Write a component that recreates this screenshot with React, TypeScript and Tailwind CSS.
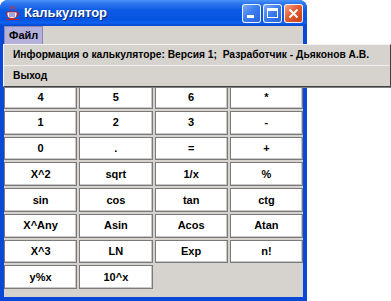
import React from "react";

const rows = [
  ["4", "5", "6", "*"],
  ["1", "2", "3", "-"],
  ["0", ".", "=", "+"],
  ["X^2", "sqrt", "1/x", "%"],
  ["sin", "cos", "tan", "ctg"],
  ["X^Any", "Asin", "Acos", "Atan"],
  ["X^3", "LN", "Exp", "n!"],
  ["y%x", "10^x"],
];

function JavaIcon() {
  return (
    <svg width="16" height="16" viewBox="0 0 16 16">
      <path d="M6 1c-1 1.5 1 2 0 3.5M9 1c-1 1.5 1 2 0 3.5" stroke="#e03030" strokeWidth="1.3" fill="none" />
      <path d="M2 7h10v2.5c0 2.5-2 4-5 4s-5-1.5-5-4z" fill="#fff" stroke="#c02020" strokeWidth="1" />
      <path d="M12 8h1.5c1 0 1 2.5-1.5 2.5" stroke="#c02020" strokeWidth="1" fill="none" />
      <path d="M4 9h6M4 11h6" stroke="#3050c0" strokeWidth="1" />
      <path d="M1 14.5h13" stroke="#c02020" strokeWidth="1" />
    </svg>
  );
}

function TitleButton({ kind }: { kind: "min" | "max" | "close" }) {
  const bg =
    kind === "close"
      ? "bg-[linear-gradient(135deg,#f2a48a_0%,#e25b30_45%,#c8401a_100%)]"
      : "bg-[linear-gradient(135deg,#7fa9f5_0%,#3c7ef0_45%,#2a62dc_100%)]";
  return (
    <div className={`w-[19px] h-[19px] rounded-[3px] border border-white/90 flex items-center justify-center ${bg}`}>
      {kind === "min" && <div className="w-[7px] h-[3px] bg-white mt-[7px] mr-[3px]" />}
      {kind === "max" && <div className="w-[11px] h-[10px] border border-white border-t-[3px]" />}
      {kind === "close" && (
        <svg width="11" height="11" viewBox="0 0 11 11">
          <path d="M1.5 1.5l8 8M9.5 1.5l-8 8" stroke="#fff" strokeWidth="2" />
        </svg>
      )}
    </div>
  );
}

export default function App() {
  return (
    <div className="relative w-[391px] h-[301px] bg-white overflow-hidden font-['Liberation_Sans',Arial,sans-serif]">
      <div className="w-[307px] h-[301px] flex flex-col rounded-t-[8px] overflow-hidden bg-[#0a48d8]">
        <div className="h-[26px] flex items-center pl-[5px] pr-[4px] bg-[linear-gradient(180deg,#4a94fa_0%,#3078ee_12%,#0c5ae4_40%,#0655e2_75%,#0d62f2_88%,#0045c8_100%)]">
          <JavaIcon />
          <span className="ml-[3px] text-white font-bold text-[13px] [text-shadow:1px_1px_0_#0a2a80]">
            Калькулятор
          </span>
          <div className="ml-auto flex gap-[2px]">
            <TitleButton kind="min" />
            <TitleButton kind="max" />
            <TitleButton kind="close" />
          </div>
        </div>
        <div className="flex-1 mx-[4px] mb-[4px] bg-[#d6d3ce] flex flex-col">
          <div className="h-[19px] flex items-stretch">
            <div className="px-[4px] flex items-center bg-[#b3b0da] border border-[#8a88b8] text-[11px] font-bold text-black">
              Файл
            </div>
          </div>
          <div className="h-[40px] px-[1px] pt-[2px]">
            <div className="h-[20px] bg-white border border-[#7f7f7f]" />
          </div>
          <div className="grid grid-cols-4 gap-x-[2px] gap-y-[2px] h-[204px] grid-rows-8">
            {rows.flat().map((label, i) => (
              <div
                key={i}
                className="bg-white border border-[#7a7a7a] shadow-[inset_-1px_-1px_0_#c8c8c8] flex items-center justify-center text-[11px] font-bold text-black"
              >
                {label}
              </div>
            ))}
          </div>
        </div>
      </div>

      <div className="absolute left-[3px] top-[44px] w-[388px] bg-[#d6d3ce] border border-[#f4f4f4] border-r-[#404040] border-b-[#404040] shadow-[1px_1px_0_#808080]">
        <div className="h-[21px] flex items-center pl-[9px] text-[10.25px] font-bold text-black border-b border-[#f0f0f0] whitespace-pre">
          Информация о калькуляторе: Версия 1;  Разработчик - Дьяконов А.В.
        </div>
        <div className="h-[20px] flex items-center pl-[9px] text-[10.25px] font-bold text-black">
          Выход
        </div>
      </div>
    </div>
  );
}
